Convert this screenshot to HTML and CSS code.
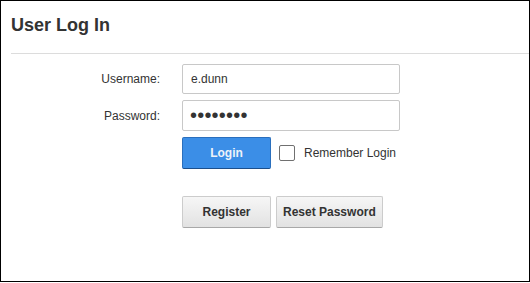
FILE: index.html
```html
<!DOCTYPE html>
<html>
<head>
<meta charset="utf-8">
<link rel="stylesheet" href="styles.css">
</head>
<body>
<div class="panel">
  <div class="header"><h1 class="title">User Log In</h1></div>
  <form class="form">
    <label class="label" for="user">Username:</label>
    <input class="field" id="user" type="text" value="e.dunn">
    <label class="label" for="pass">Password:</label>
    <input class="field field-pass" id="pass" type="password" value="password">
    <div class="spacer"></div>
    <div class="login-row">
      <button type="button" class="btn btn-primary">Login</button>
      <span class="check"></span>
      <span class="check-label">Remember Login</span>
    </div>
    <div class="spacer"></div>
    <div class="extra-row">
      <button type="button" class="btn btn-default">Register</button>
      <button type="button" class="btn btn-default">Reset Password</button>
    </div>
  </form>
</div>
</body>
</html>
```
FILE: styles.css
```css
html, body {
  margin: 0;
  padding: 0;
  background: #fff;
}
body {
  font-family: "Liberation Sans", Arial, sans-serif;
  color: #333;
}
.panel {
  width: 530px;
  height: 282px;
  box-sizing: border-box;
  border: 1px solid #000;
}
.header {
  margin-left: 10px;
  padding: 14px 0 18px;
  border-bottom: 1px solid #dcdcdc;
}
.title {
  margin: 0;
  font-size: 18px;
  line-height: 20px;
  font-weight: bold;
  color: #333;
}
.form {
  display: grid;
  grid-template-columns: 159px 218px;
  column-gap: 22px;
  row-gap: 6px;
  align-items: center;
  margin-top: 10px;
}
.label {
  text-align: right;
  font-size: 12px;
}
.field {
  box-sizing: border-box;
  height: 30px;
  margin: 0;
  padding: 0 8px;
  border: 1px solid #c8c8c8;
  border-radius: 2px;
  font-family: "Liberation Sans", Arial, sans-serif;
  font-size: 12px;
  color: #333;
  outline: none;
}
.field-pass {
  height: 31px;
  font-size: 20px;
  padding-left: 7px;
  letter-spacing: 0.2px;
}
.login-row {
  display: flex;
  align-items: center;
}
.extra-row {
  display: flex;
  gap: 5px;
  margin-top: 21px;
}
.btn {
  box-sizing: border-box;
  height: 32px;
  min-width: 89px;
  padding: 0 6px;
  border-radius: 2px;
  font-family: "Liberation Sans", Arial, sans-serif;
  font-size: 12px;
  font-weight: bold;
  cursor: pointer;
}
.btn-primary {
  background: #3b8ee7;
  border: 1px solid #2a6fbd;
  border-bottom-color: #1b4f8c;
  color: #eef3f9;
}
.btn-default {
  background: linear-gradient(#f6f6f6, #e2e2e2);
  border: 1px solid #cccccc;
  border-bottom-color: #a8a8a8;
  color: #333;
}
.check {
  box-sizing: border-box;
  width: 16px;
  height: 16px;
  margin-left: 8px;
  border: 1px solid #707070;
  border-radius: 2px;
  background: #fff;
}
.check-label {
  margin-left: 9px;
  font-size: 12px;
}
```
